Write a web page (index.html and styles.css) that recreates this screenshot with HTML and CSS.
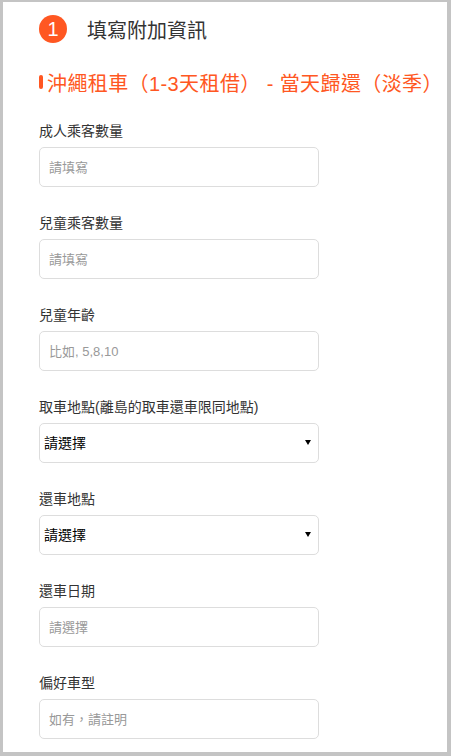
FILE: index.html
```html
<!DOCTYPE html>
<html lang="zh-Hant">
<head>
    <meta charset="UTF-8">
    <meta name="viewport" content="width=device-width, initial-scale=1.0">
    <title>填寫附加資訊</title>
    <link rel="stylesheet" href="styles.css">
</head>
<body>
    <div class="panel">
        <div class="step-header">
            <span class="step-num">1</span>
            <span class="step-title">填寫附加資訊</span>
        </div>
        <div class="product-name">沖繩租車（1-3天租借） - 當天歸還（淡季）</div>

        <div class="field">
            <label>成人乘客數量</label>
            <input type="text" placeholder="請填寫">
        </div>
        <div class="field">
            <label>兒童乘客數量</label>
            <input type="text" placeholder="請填寫">
        </div>
        <div class="field">
            <label>兒童年齡</label>
            <input type="text" placeholder="比如, 5,8,10">
        </div>
        <div class="field">
            <label>取車地點(離島的取車還車限同地點)</label>
            <div class="select-wrap">
                <select><option>請選擇</option></select>
            </div>
        </div>
        <div class="field">
            <label>還車地點</label>
            <div class="select-wrap">
                <select><option>請選擇</option></select>
            </div>
        </div>
        <div class="field">
            <label>還車日期</label>
            <input type="text" placeholder="請選擇">
        </div>
        <div class="field">
            <label>偏好車型</label>
            <input type="text" placeholder="如有，請註明">
        </div>
    </div>
</body>
</html>
```

FILE: styles.css
```css
body {
    margin: 0;
    background-color: #c4c4c4; /* grey frame around the panel */
    font-family: "Liberation Sans", "Noto Sans CJK TC", sans-serif;
    color: #333;
}

.panel {
    background-color: #fff;
    margin: 2px 4px 0 3px;
    height: 750px;
    overflow: hidden;
    padding: 13px 0 0 36px;
    box-sizing: border-box;
}

.step-header {
    display: flex;
    align-items: center;
    height: 28px;
    margin-bottom: 25px;
}

.step-num {
    width: 28px;
    height: 28px;
    border-radius: 50%;
    background-color: #ff5722;
    color: #fff;
    font-size: 20px;
    display: flex;
    justify-content: center;
    align-items: center;
    margin-right: 20px;
}

.step-title {
    font-size: 20px;
    color: #333;
}

.product-name {
    display: flex;
    align-items: center;
    height: 28px;
    font-size: 20px;
    letter-spacing: 0.4px;
    color: #ff5722;
    white-space: nowrap;
    margin-bottom: 25px;
}

.product-name::before {
    content: "";
    width: 4px;
    height: 14px;
    border-radius: 2px;
    background-color: #ff5722;
    margin-right: 4px;
}

.field {
    margin-bottom: 26px;
}

.field label {
    display: block;
    font-size: 14px;
    line-height: 20px;
    margin-bottom: 6px;
    color: #333;
}

.field input,
.field select {
    display: block;
    width: 280px;
    height: 40px;
    box-sizing: border-box;
    border: 1px solid #ddd;
    border-radius: 5px;
    background-color: #fff;
    font-family: inherit;
    outline: none;
}

.field input {
    padding: 0 9px;
    font-size: 13px;
}

.field input::placeholder {
    color: #999;
}

.select-wrap {
    position: relative;
    width: 280px;
}

.field select {
    appearance: none;
    -webkit-appearance: none;
    padding: 0 4px;
    font-size: 14px;
    color: #000;
}

/* small black dropdown arrow */
.select-wrap::after {
    content: "";
    position: absolute;
    right: 8px;
    top: 17px;
    border-left: 3px solid transparent;
    border-right: 3px solid transparent;
    border-top: 5px solid #000;
}
```
